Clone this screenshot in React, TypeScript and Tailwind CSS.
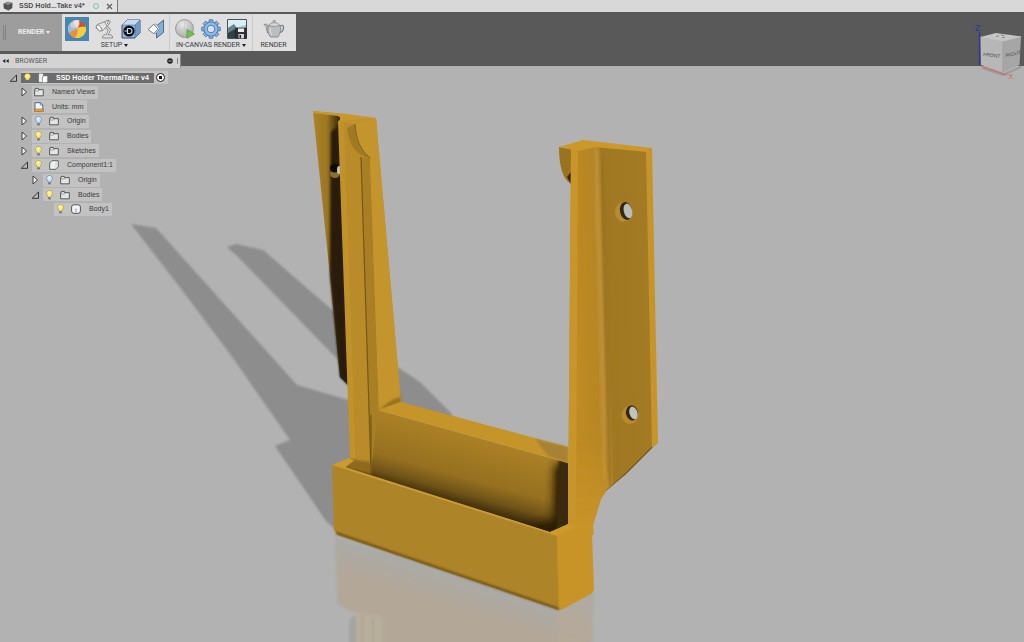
import { ReactNode, useState } from 'react';

type NodeIcon = 'folder' | 'units' | 'component' | 'body' | 'root';

interface TreeNode {
  id: string;
  label: string;
  indent: string;
  icon: NodeIcon;
  expander?: 'open' | 'closed';
  light?: 'on' | 'off';
}

const nodes: TreeNode[] = [
  { id: 'root', label: 'SSD Holder ThermalTake v4', indent: 'pl-[9px]', icon: 'root', expander: 'open', light: 'on' },
  { id: 'views', label: 'Named Views', indent: 'pl-5', icon: 'folder', expander: 'closed' },
  { id: 'units', label: 'Units: mm', indent: 'pl-5', icon: 'units' },
  { id: 'origin', label: 'Origin', indent: 'pl-5', icon: 'folder', expander: 'closed', light: 'off' },
  { id: 'bodies', label: 'Bodies', indent: 'pl-5', icon: 'folder', expander: 'closed', light: 'on' },
  { id: 'sketches', label: 'Sketches', indent: 'pl-5', icon: 'folder', expander: 'closed', light: 'on' },
  { id: 'component', label: 'Component1:1', indent: 'pl-5', icon: 'component', expander: 'open', light: 'on' },
  { id: 'c-origin', label: 'Origin', indent: 'pl-[31px]', icon: 'folder', expander: 'closed', light: 'off' },
  { id: 'c-bodies', label: 'Bodies', indent: 'pl-[31px]', icon: 'folder', expander: 'open', light: 'on' },
  { id: 'body1', label: 'Body1', indent: 'pl-[42px]', icon: 'body', light: 'on' },
];

function Expander({ open }: { open: boolean }) {
  return (
    <svg viewBox="0 0 10 10" className="size-[10px]">
      {open ? (
        <path d="M7.500 2V8.300H1.200Z" fill="#bbb" stroke="#333" strokeWidth="1" />
      ) : (
        <path d="M2 1L6.500 5L2 9Z" fill="#eee" stroke="#333" strokeWidth=".9" />
      )}
    </svg>
  );
}

function Bulb({ on }: { on: boolean }) {
  return (
    <svg viewBox="0 0 7 10" className="h-[10px] w-[7px]">
      <path
        d="M3.500.5C1.800.5.5 1.700.5 3.300.5 4.600 1.800 5.300 2.100 7H4.900C5.200 5.300 6.500 4.600 6.500 3.300 6.500 1.700 5.200.5 3.500.5Z"
        fill={on ? '#ffec80' : '#cfe4f5'}
        stroke={on ? '#b09a3c' : '#6885a3'}
        strokeWidth=".7"
      />
      <path d="M2.300 2Q3 1.300 3.800 1.700L3 4Z" fill="#fff" />
      <path d="M2.200 7.500H4.800V9.300H2.200Z" fill="#6d6d6d" />
    </svg>
  );
}

function TreeIcon({ icon }: { icon: NodeIcon }) {
  return (
    <svg viewBox="0 0 10 10" className="size-[10px]">
      {icon === 'folder' && (
        <>
          <path d="M.6 8.800V2.600H1.200V1.400H4.400V2.600H9.300V8.800Z" fill="#e4e6e6" stroke="#4d4d4d" strokeWidth=".9" />
          <path d="M1 4H4.800L5.500 3.200" fill="none" stroke="#777" strokeWidth=".6" />
        </>
      )}
      {icon === 'units' && (
        <>
          <path d="M1 .7H6.300L8.800 3V9H1Z" fill="#f7f7f7" stroke="#3c5d85" strokeWidth=".9" />
          <path d="M6.300.7V3H8.800" fill="none" stroke="#3c5d85" strokeWidth=".6" />
          <path d="M.6 7H9.400V9.600H.6Z" fill="#eda43a" stroke="#8d5f16" strokeWidth=".5" />
        </>
      )}
      {icon === 'component' && (
        <>
          <path d="M.7 3L3 .7H9.300V6.800L7 9.300H.7Z" fill="#eceeed" stroke="#555" strokeWidth=".9" strokeLinejoin="round" />
          <path d="M7 3L9 1M7 3V9" fill="none" stroke="#b8b8b8" strokeWidth=".5" />
        </>
      )}
      {icon === 'body' && (
        <>
          <rect x=".6" y=".8" width="8.800" height="8.500" rx="2.200" fill="#f4f4f4" stroke="#444" strokeWidth=".9" />
          <path d="M3.800 4.500H6V8H3.800Z" fill="#c7c7c7" />
        </>
      )}
      {icon === 'root' && (
        <>
          <path d="M1 .8H5V3.500H4V9H1Z" fill="#f2f2f2" stroke="#ccc" strokeWidth=".4" />
          <path d="M4.500 3.800L6 3H9.400V8.200L8.300 9.500H4.500Z" fill="#fff" stroke="#8b8b8b" strokeWidth=".5" />
        </>
      )}
    </svg>
  );
}

function Browser() {
  const [lights, setLights] = useState<Record<string, boolean>>(
    Object.fromEntries(nodes.map((node) => [node.id, node.light === 'on']))
  );

  return (
    <ul className="relative mt-[5px] flex h-[145px] w-[181px] flex-col justify-between">
      {nodes.map((node) => {
        const isRoot = node.id === 'root';
        return (
          <li key={node.id} className={`flex h-[13px] items-center ${node.indent}`}>
            {node.expander ? (
              <button aria-label={`Toggle ${node.label}`} className="w-[12px]">
                <Expander open={node.expander === 'open'} />
              </button>
            ) : (
              <span className="w-[12px]" />
            )}
            <div className="flex h-[13px] items-center bg-[#c1c2c1]">
              <div
                className={`flex items-center ${node.light ? 'pl-[3px]' : 'pl-[2px]'} ${
                  isRoot ? 'h-[10px] bg-[#6c6c6c] pr-[5px]' : 'h-[13px] pr-[3px]'
                }`}
              >
                {node.light && (
                  <button
                    aria-label={`Show ${node.label}`}
                    className="mr-[7px]"
                    onClick={() => setLights({ ...lights, [node.id]: !lights[node.id] })}
                  >
                    <Bulb on={lights[node.id]} />
                  </button>
                )}
                <TreeIcon icon={node.icon} />
                <span
                  className={`ml-[8px] text-[7px] leading-[10px] whitespace-nowrap ${
                    isRoot ? 'font-bold text-white' : 'text-[#3c3c3c]'
                  }`}
                >
                  {node.label}
                </span>
              </div>
              {isRoot && (
                <input
                  type="radio"
                  name="active"
                  aria-label="Activate component"
                  defaultChecked
                  className="mr-[3px] ml-[2px] size-[9px] appearance-none rounded-full border border-[#222] bg-[radial-gradient(circle,#111_0_1.5px,#fff_2px)]"
                />
              )}
            </div>
          </li>
        );
      })}
    </ul>
  );
}

function AppearanceIcon() {
  return (
    <svg viewBox="0 0 24 24" className="size-[24px] bg-[#4786ae]">
      <circle cx="12" cy="12" r="9" fill="#e8c7a4" />
      <path d="M12 11.500L9 3.500A9 9 0 0 0 4.500 17Z" fill="#9fbcd8" />
      <path d="M12 11.500L8 4A9 9 0 0 1 14.500 3.400Z" fill="#f0dccb" />
      <path d="M12 11.500Q15.500 8 14 3.200A9 9 0 0 1 20.800 10Q15 9 12 11.500Z" fill="#c2543f" />
      <path d="M12 11.500Q16 8.500 20.900 10.500A9 9 0 0 1 10 20.800Q14 16 12 11.500Z" fill="#f3cd3b" />
      <path d="M12 11.500Q14 16 10 20.800A9 9 0 0 1 4 16Z" fill="#e39045" />
      <ellipse cx="9" cy="8" rx="3.500" ry="3" fill="#fff" opacity=".35" />
    </svg>
  );
}

function LampIcon() {
  return (
    <svg viewBox="0 0 20 20" className="size-[20px]" stroke="#777" strokeWidth=".8" strokeLinejoin="round">
      <path d="M7.500 18Q7.500 15.500 12.500 15.500T17.500 18V19H7.500Z" fill="#dedede" />
      <path d="M12 16L14.500 11L10.500 7" fill="none" stroke="#777" strokeWidth="2.600" />
      <path d="M12 16L14.500 11L10.500 7" fill="none" stroke="#e8e8e8" strokeWidth="1.200" />
      <path d="M1 8.500L2.500 5.500L10 2.500L13.500 1L15.500 3L12 7.500L7 12Q3 12.500 1 8.500Z" fill="#e3e3e3" />
      <ellipse cx="4" cy="9" rx="1.900" ry="3.600" transform="rotate(-40 4 9)" fill="#fafafa" />
      <path d="M9.500 3L12 7M13.500 1L12.500 5" fill="none" />
    </svg>
  );
}

function SceneIcon() {
  return (
    <svg viewBox="0 0 20 20" className="size-[20px]" strokeLinejoin="round">
      <path d="M1 6L6 1H19V14L14 19H1Z" fill="#8fb5dc" stroke="#30435a" strokeWidth=".9" />
      <path d="M1 6L6 1H19L14 6Z" fill="#c5daf0" />
      <path d="M14 6L19 1V14L14 19Z" fill="#6f9bcb" />
      <path d="M1 6H14V19M14 6L19 1" fill="none" stroke="#44607f" strokeWidth=".5" />
      <circle cx="8" cy="12" r="5.600" fill="#0d0d0d" />
      <path d="M6.500 9.500H8.500A2.500 2.500 0 0 1 8.500 14.500H6.500Z" fill="none" stroke="#cfe2f6" strokeWidth="1.100" />
      <path d="M3.500 12H6" stroke="#cfe2f6" strokeWidth="1" />
    </svg>
  );
}

function DecalIcon() {
  return (
    <svg viewBox="0 0 18 20" className="h-[20px] w-[18px]" strokeLinejoin="round">
      <path d="M9.500 7L16.500 1V13.500L9.500 19Z" fill="#83afd6" stroke="#3f6286" strokeWidth=".9" />
      <path d="M1 10.500L6.500 5.500L11 10L6.500 14.500Z" fill="#fbfbfb" stroke="#707070" strokeWidth=".9" />
      <path d="M6.500 5.500L9.500 5L12.500 9.500L9.500 14L6.500 14.500L11 10Z" fill="#cfd8dd" stroke="#6c7780" strokeWidth=".5" />
    </svg>
  );
}

function CanvasRenderIcon() {
  return (
    <svg viewBox="0 0 20 20" className="size-[20px]">
      <defs>
        <radialGradient id="ball" cx=".4" cy=".3" r=".8">
          <stop offset="0" stopColor="#e9e9e9" />
          <stop offset="1" stopColor="#9fa29f" />
        </radialGradient>
      </defs>
      <circle cx="9.500" cy="9.500" r="9" fill="url(#ball)" stroke="#868686" strokeWidth=".7" />
      <path d="M9.500 1V18M1 10H18" stroke="#c4c4c4" strokeWidth=".5" />
      <path d="M12 10.500L19.500 15L12 19.300Z" fill="#6fc24b" stroke="#4f9a3a" strokeWidth=".7" />
    </svg>
  );
}

const gearTeeth = [0, 45, 90, 135, 180, 225, 270, 315];

function GearIcon() {
  return (
    <svg viewBox="0 0 20 20" className="size-[20px]">
      <g fill="#86b2e3" stroke="#44709f" strokeWidth=".8">
        {gearTeeth.map((angle) => (
          <path key={angle} d="M7.700 4L8.300.7H11.700L12.300 4Z" transform={`rotate(${angle} 10 10)`} />
        ))}
        <circle cx="10" cy="10" r="7" />
      </g>
      <circle cx="10" cy="10" r="6.400" fill="#8fbae9" />
      <circle cx="10" cy="10" r="3.800" fill="#dce2e7" stroke="#44709f" strokeWidth=".9" />
    </svg>
  );
}

function CaptureIcon() {
  return (
    <svg viewBox="0 0 20 20" className="size-[20px]">
      <path d="M.6.6H19.400V19.400H.6Z" fill="#a5cbd6" stroke="#39464b" strokeWidth="1" />
      <path d="M1 1H19V6L11 8L1 10Z" fill="#d9eef2" />
      <path d="M1 9L7 5L12 12V19H1Z" fill="#66838a" />
      <path d="M1 14L8 10L12 19H1Z" fill="#304146" />
      <path d="M8.500 9H19.400V19.400H10L8.500 18Z" fill="#303236" stroke="#15171a" strokeWidth=".5" />
      <path d="M11 9.500H17V13H11Z" fill="#e9edf0" />
      <path d="M11.500 15H17V19.400H11.500Z" fill="#cfd3d6" />
      <path d="M12.500 16H14V19H12.500Z" fill="#222" />
    </svg>
  );
}

function TeapotIcon() {
  return (
    <svg viewBox="0 0 22 20" className="h-[20px] w-[22px]" stroke="#7d7f81" strokeLinejoin="round">
      <path d="M17 7Q21 5 20.500 9T17 13.500" fill="none" strokeWidth="1.400" />
      <path d="M4.500 14L3 7.500L1 5.500L3.500 5L6 9Z" fill="#c3c6c8" strokeWidth=".8" />
      <path d="M5.500 6.500Q11 4.500 17 6.500Q19 11 16.500 15L15 18H7.500L5.500 15Q3.500 11 5.500 6.500Z" fill="#bbbec0" strokeWidth=".8" />
      <path d="M5.500 6.500Q7.500 3.500 11.200 3.500T17 6.500Q11 8.500 5.500 6.500Z" fill="#d6d8d9" strokeWidth=".7" />
      <circle cx="11.200" cy="2.500" r="1.200" fill="#c9c9c9" strokeWidth=".7" />
      <path d="M7.500 9Q6.500 13 9 16" fill="none" stroke="#d8d8d8" strokeWidth="1.200" />
    </svg>
  );
}

function Tool({ label, children }: { label: string; children: ReactNode }) {
  return (
    <button aria-label={label} title={label} className="flex h-[24px] items-center justify-center">
      {children}
    </button>
  );
}

function ToolGroup({ label, menu, className, children }: { label: string; menu?: boolean; className: string; children: ReactNode }) {
  return (
    <div className={`flex flex-col items-center pt-[3px] ${className}`}>
      <div className="flex items-center gap-[6px]">{children}</div>
      <button className="flex h-[8px] items-center gap-[2px] font-[Roboto,sans-serif] text-[7px] leading-[8px] whitespace-nowrap text-[#3a3a3a]">
        {label}
        {menu && <span className="border-x-2 border-t-3 border-x-transparent border-t-[#222]" />}
      </button>
    </div>
  );
}

function ViewCube() {
  return (
    <svg viewBox="972 20 52 64" className="absolute top-[20px] right-0 z-10 h-[64px] w-[52px]">
      <path d="M979.500 32V65.500" stroke="#35359c" strokeWidth="1.500" />
      <path d="M982 68L1003 75L1021 67" fill="none" stroke="#777" strokeWidth="2" opacity=".4" />
      <path d="M981 66L1007 75" stroke="#c66" strokeWidth="1.200" />
      <path d="M980.500 37L1003 41V72L981 65Z" fill="#b7b7b7" />
      <path d="M1003 41L1021 36.500L1019.500 65L1003 72Z" fill="#a6a6a6" />
      <path d="M980.500 37L996 33L1021 36.500L1003 41Z" fill="#c5c5c5" />
      <path d="M981 37L1003 41M1003 41L1021 36.500" fill="none" stroke="#cfcfcf" strokeWidth=".7" />
      <path d="M1003 41V72" stroke="#999" strokeWidth=".7" />
      <path d="M996 36.500L999 35.800M1002 37.800L1005 37M1001 35L1004 35.500" stroke="#777" strokeWidth=".8" />
      <g fontFamily="Liberation Sans, sans-serif" fill="#4d4d4d">
        <text x="983" y="56" fontSize="5" transform="rotate(7 983 56)">FRONT</text>
        <text x="1006" y="57" fontSize="5" transform="rotate(-12 1006 57)">RIGHT</text>
        <text x="975" y="31" fontSize="9" fill="#35359c">Z</text>
        <text x="1008" y="79" fontSize="8" fill="#c96a62">X</text>
      </g>
    </svg>
  );
}

function Model() {
  return (
    <svg
      viewBox="0 66 1024 576"
      preserveAspectRatio="xMidYMin slice"
      className="absolute inset-0 h-full w-full"
      role="img"
      aria-label="SSD holder model"
    >
      <defs>
        <filter id="soft">
          <feGaussianBlur stdDeviation=".8" />
        </filter>
        <filter id="shade" x="-20%" y="-20%" width="140%" height="140%">
          <feGaussianBlur stdDeviation="4" />
        </filter>
        <clipPath id="wallClip">
          <path d="M378 410L568 463V524L550 532L346 468L354 461L370 471Z" />
        </clipPath>
        <clipPath id="postClip">
          <path d="M571 150L593 146L648 151L653 447L626 474L607 490L601 499L593 525L594 535H568Z" />
        </clipPath>
        <linearGradient id="flange" gradientUnits="userSpaceOnUse" x1="314" y1="0" x2="340" y2="0">
          <stop offset="0" stopColor="#ab8226" />
          <stop offset=".5" stopColor="#9c7622" />
          <stop offset=".8" stopColor="#5c4513" />
          <stop offset="1" stopColor="#3b2b0b" />
        </linearGradient>
        <linearGradient id="wall" gradientUnits="userSpaceOnUse" x1="470" y1="430" x2="449" y2="506">
          <stop offset="0" stopColor="#ad8326" />
          <stop offset=".6" stopColor="#967020" />
          <stop offset=".8" stopColor="#6f5317" />
          <stop offset="1" stopColor="#2d2006" />
        </linearGradient>
        <linearGradient id="postFace" gradientUnits="userSpaceOnUse" x1="576" y1="300" x2="651" y2="297">
          <stop offset="0" stopColor="#bd8a23" />
          <stop offset=".2" stopColor="#b98722" />
          <stop offset=".29" stopColor="#b58628" />
          <stop offset=".34" stopColor="#b78a31" />
          <stop offset=".42" stopColor="#a07822" />
          <stop offset="1" stopColor="#a37b24" />
        </linearGradient>
        <linearGradient id="joint" gradientUnits="userSpaceOnUse" x1="0" y1="440" x2="0" y2="530">
          <stop offset="0" stopColor="#c89428" stopOpacity="0" />
          <stop offset="1" stopColor="#c89428" />
        </linearGradient>
        <linearGradient id="mirror" gradientUnits="userSpaceOnUse" x1="450" y1="572" x2="440" y2="604">
          <stop offset="0" stopColor="#a9aaa8" />
          <stop offset="1" stopColor="#b3a898" />
        </linearGradient>
      </defs>

      {/* floor shadows */}
      <g fill="#8c8d8c" filter="url(#soft)">
        <path d="M131 224L156 228L297 385L352 401V536L337 531L326 521L275 446L290 440L233 358L182 290Z" />
        <path d="M227 247L236 244L263 250L345 321V367L238 257Z" />
        <path d="M396 366L420 382L452 414L450 424L396 410Z" />
      </g>

      {/* floor reflection */}
      <g filter="url(#soft)">
        <path d="M335 537L557 609L594 593L592 650H380L379 616L353 612L337 604Z" fill="url(#mirror)" />
        <path d="M558 612L592 597V650H558Z" fill="#b6aa98" opacity=".7" />
        <path d="M356 612L383 618V650H356Z" fill="#b8ae9c" />
        <path d="M349 620L356 614V650H349Z" fill="#a3a4a3" />
        <path d="M362 615V650M373 618V650" stroke="#a89d87" strokeWidth="1" />
      </g>

      {/* left post */}
      <path d="M313 111L340 114L350 387L340 377L330 276Z" fill="url(#flange)" />
      <path d="M331 132L339 125L348 385L340 377L330 276Z" fill="#2b1f07" filter="url(#soft)" />
      <ellipse cx="335" cy="174" rx="5" ry="4" fill="#8b6f38" />
      <ellipse cx="335" cy="168" rx="5" ry="4.500" fill="#0e0b05" />
      <ellipse cx="339" cy="170" rx="2" ry="4" fill="#c6c6c6" />
      <path d="M313 111L347 114L376 118L355 124L338 122L341 118L338 116L313 113Z" fill="#c9982c" />
      <path d="M338 121L376 118L401 402L378 412L370 472L352 468L350 459Z" fill="#c1912a" />
      <path d="M344 123L355 124L363 160L371 470L356 468Z" fill="#b98b29" />
      <path d="M361 157L370 158L379 411L378 420L371 474Z" fill="#a97f25" />
      <path d="M361 157L371 472" stroke="#765818" strokeWidth="1.200" />
      <path d="M355 124L376 118L401 402L379 411L370 158Q356 150 355 124Z" fill="#c4952c" />
      <path d="M347 128L355 124Q356 147 370 158Q350 155 347 128Z" fill="#a17924" />
      <path d="M355 124Q356 147 370 158" fill="none" stroke="#856319" strokeWidth="1" />
      <path d="M400 391L401 402L379 411Q388 400 400 397Z" fill="#99721c" filter="url(#soft)" />

      {/* back wall */}
      <path d="M378 410L568 463V524L550 532L346 468L354 461L371 471Z" fill="url(#wall)" />
      <g clipPath="url(#wallClip)">
        <path d="M554 464L575 466V540H480L553 520Z" fill="#2a1e06" filter="url(#shade)" />
        <path d="M559 450H575V540H556Z" fill="#3a2a09" filter="url(#soft)" />
      </g>
      <path d="M378 410L401 402L568 447V463Z" fill="#c6952a" />
      <path d="M535 439L568 447V463L548 456Z" fill="#94763a" opacity=".6" filter="url(#soft)" />
      <path d="M350 459L371 462L371 474L346 468Z" fill="#8f6b1e" filter="url(#soft)" />
      <path d="M371 415V472" stroke="#6c5116" strokeWidth="1" />

      {/* tray side, continues up into the right post */}
      <path d="M557 535L576 526L593 518L592 535L594 590L591 594L563 609L558 610Z" fill="#c89428" />

      {/* right post */}
      <path d="M559 147L571 149V184Q559 177 559 147Z" fill="#9a7320" />
      <path d="M567 177L571 172V184Z" fill="#302409" />
      <path d="M571 150L593 146L648 151L653 447L626 474L607 490L601 499L593 525L576 526H568Z" fill="url(#postFace)" />
      <g clipPath="url(#postClip)">
        <path d="M596 150L605 480" stroke="#c09338" strokeWidth="5" filter="url(#soft)" opacity=".7" />
        <path d="M602 156L610 494" stroke="#977020" strokeWidth="3" filter="url(#soft)" opacity=".7" />
        <path d="M574 440H602L610 488L602 500L594 536L568 540Z" fill="url(#joint)" filter="url(#soft)" />
        <path d="M607 491L626 474L653 447" fill="none" stroke="#67501e" strokeWidth="2" />
      </g>
      <path d="M571 150L578 150L576 527L568 524Z" fill="#c8952a" />
      <path d="M559 147L583 140L652 148L647 152L595 147L578 151Z" fill="#cb992b" />
      <path d="M646 151L652 148L658 443L652 448Z" fill="#c7942a" />
      <ellipse cx="623.500" cy="212" rx="8.500" ry="10" fill="#b78b34" />
      <ellipse cx="626" cy="211" rx="6" ry="9" transform="rotate(-12 626 211)" fill="#33270d" />
      <ellipse cx="628" cy="211" rx="4.200" ry="7.500" transform="rotate(-14 628 211)" fill="#bcbcbc" />
      <ellipse cx="630" cy="415" rx="8.500" ry="9" fill="#b78b34" />
      <ellipse cx="632" cy="413" rx="6" ry="7.500" transform="rotate(-14 632 413)" fill="#33270d" />
      <ellipse cx="633.500" cy="413" rx="4" ry="6.500" transform="rotate(-18 633.500 413)" fill="#c2c2c2" />

      {/* tray */}
      <path d="M332 465L557 535L559 610L338 535L334 530Z" fill="#ad8428" />
      <path d="M336 533L559 609" stroke="#674d15" strokeWidth="2" filter="url(#soft)" />
      <path d="M332 465L349 458L354 461L345 467L550 532L568 524L576 526L557 536Z" fill="#cc9a2d" />
      <path d="M557 536L559 609" stroke="#c18e26" strokeWidth="1" />
    </svg>
  );
}

export default function App() {
  return (
    <div className="flex min-h-screen flex-col bg-[#b1b2b1] font-['Liberation_Sans',Arial,sans-serif]">
      <nav className="flex h-[12px] bg-[#d8d8d8]">
        <div className="flex w-[118px] items-center border-r border-[#777] bg-[#e2e2e2] pl-[3px]">
          <svg viewBox="0 0 10 10" className="size-[10px]">
            <path d="M.5 2.500L5 .8L9.500 2L9.300 7L5.500 9.500L.8 7.500Z" fill="#4e4e4e" />
            <path d="M.5 2.500L5 .8L9.500 2L5 4Z" fill="#8b8b8b" />
            <path d="M5 4V9.300" stroke="#777" strokeWidth=".6" />
          </svg>
          <a href="#document" className="ml-[6px] text-[7px] leading-[10px] font-bold whitespace-nowrap text-[#505050]">
            SSD Hold...Take v4*
          </a>
          <span className="ml-auto size-[6px] rounded-full border border-[#77c4b4]" />
          <button aria-label="Close tab" className="mr-[4px] ml-[7px]">
            <svg viewBox="0 0 7 7" className="size-[7px]">
              <path d="M1 1L6 6M6 1L1 6" stroke="#666" strokeWidth="1.400" />
            </svg>
          </button>
        </div>
      </nav>

      <header className="relative flex flex-col items-start gap-[3px] bg-[#595959] pt-[2px]">
        <div className="flex h-[37px] bg-[#dedfde]">
          <button className="flex w-[62px] items-center bg-[#9d9d9d] pl-[3px] font-[Roboto,sans-serif] text-[7px] font-bold text-[#eee]">
            <span className="h-[15px] w-[3px] border-x border-[#808080]" />
            <span className="ml-[12px]">RENDER</span>
            <span className="ml-[2px] border-x-2 border-t-3 border-x-transparent border-t-[#eee]" />
          </button>
          <ToolGroup label="SETUP" menu className="w-[108px] border-r border-[#cbcbcb] pr-[2px]">
            <Tool label="Appearance"><AppearanceIcon /></Tool>
            <Tool label="Scene settings"><LampIcon /></Tool>
            <Tool label="Physical material"><SceneIcon /></Tool>
            <Tool label="Decal"><DecalIcon /></Tool>
          </ToolGroup>
          <ToolGroup label="IN-CANVAS RENDER" menu className="w-[83px] border-r border-[#cbcbcb]">
            <Tool label="In-canvas render"><CanvasRenderIcon /></Tool>
            <Tool label="In-canvas render settings"><GearIcon /></Tool>
            <Tool label="Capture image"><CaptureIcon /></Tool>
          </ToolGroup>
          <ToolGroup label="RENDER" className="w-[43px] pr-[2px]">
            <Tool label="Render"><TeapotIcon /></Tool>
          </ToolGroup>
        </div>
        <div className="relative z-10 -mb-[2px] flex h-[14px] w-[181px] items-center border-r border-[#888] bg-[#d3d3d3] pr-[2px] pl-[2px]">
          <button aria-label="Collapse browser">
            <svg viewBox="0 0 7 6" className="h-[6px] w-[7px]">
              <path d="M3.300 1V5L.5 3ZM6.700 1V5L3.900 3Z" fill="#222" />
            </svg>
          </button>
          <h2 className="ml-[6px] font-[Roboto,sans-serif] text-[7px] leading-[8px] text-[#555]">BROWSER</h2>
          <button aria-label="Browser options" className="ml-auto">
            <svg viewBox="0 0 6 6" className="size-[6px]">
              <circle cx="3" cy="3" r="2.800" fill="#222" />
              <path d="M1.500 3H4.500" stroke="#ddd" strokeWidth=".8" />
            </svg>
          </button>
          <span className="ml-[3px] h-[6px] w-[2px] border-r border-[#888]" />
        </div>
      </header>

      <main className="relative flex-1">
        <Model />
        <Browser />
      </main>
      <ViewCube />
    </div>
  );
}
